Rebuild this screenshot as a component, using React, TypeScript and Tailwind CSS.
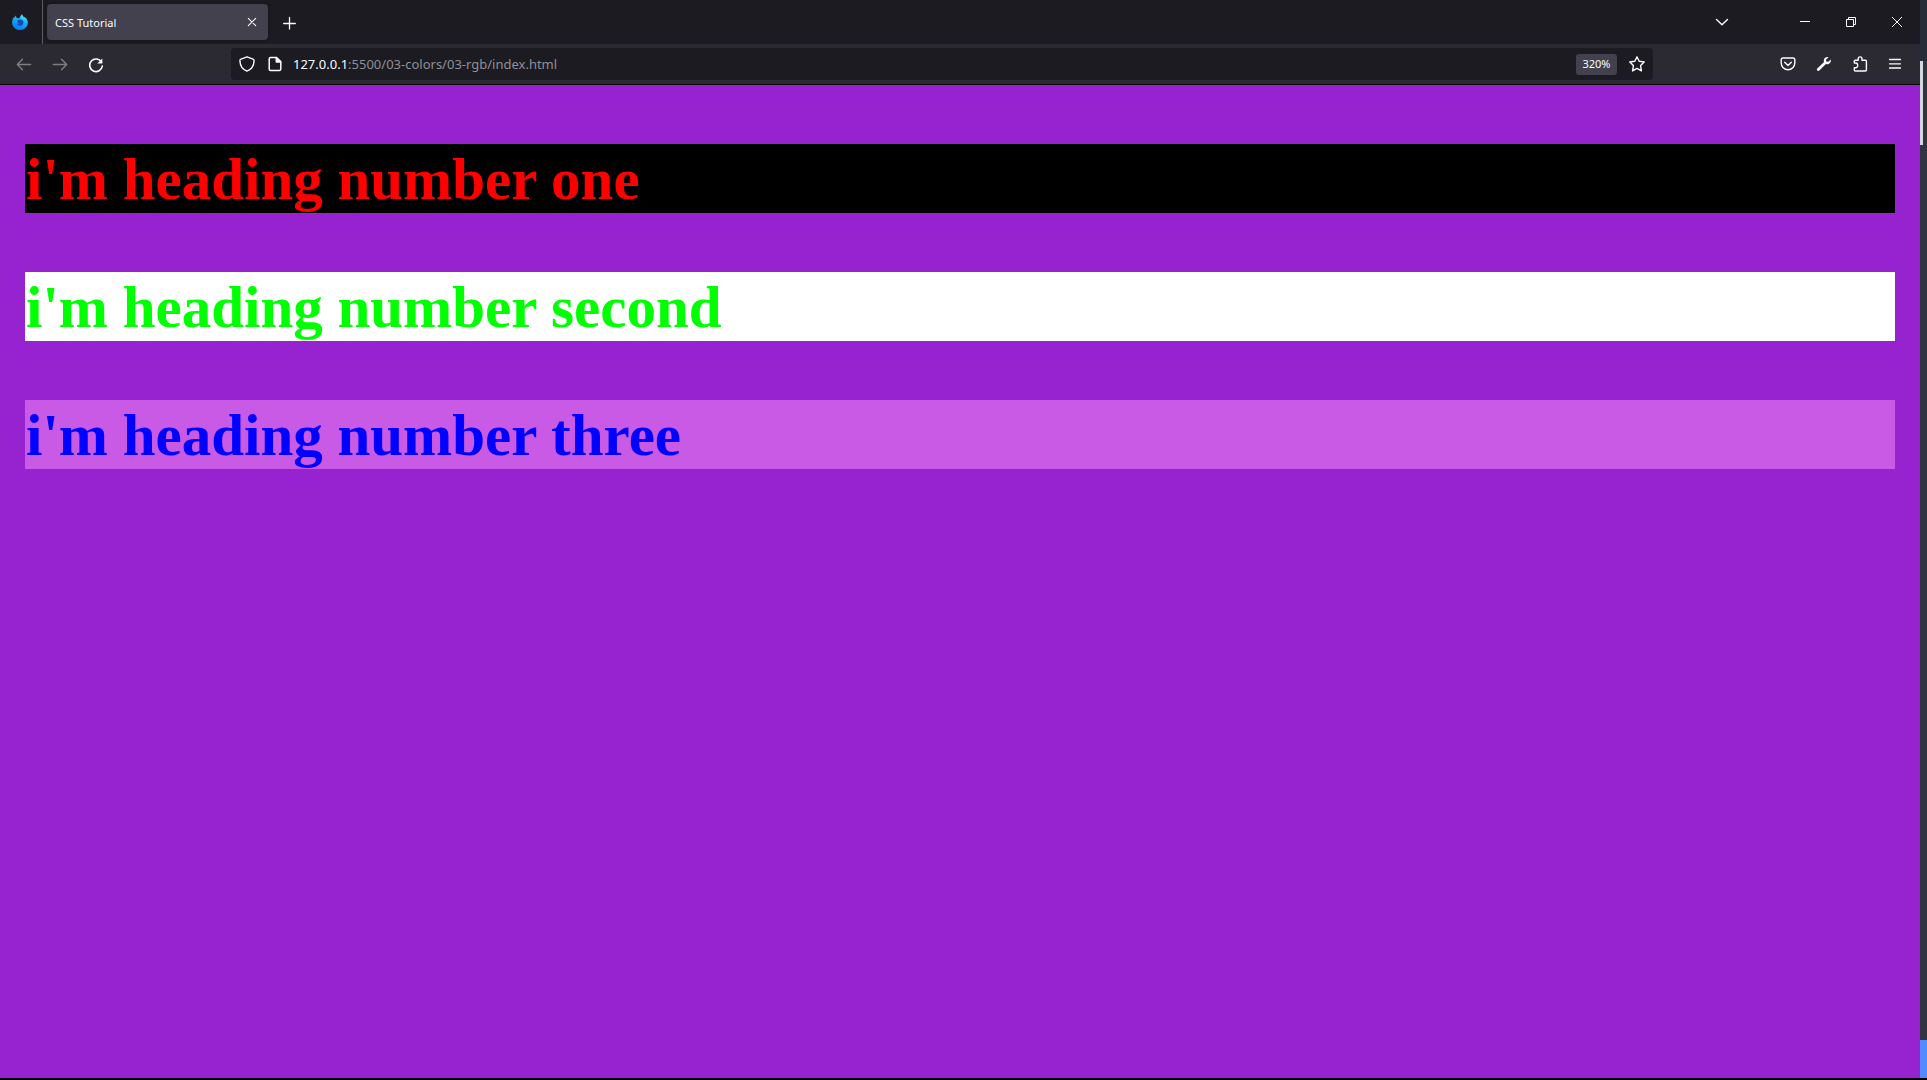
import type { ReactNode } from "react";

function IconButton({ label, className = "", children }: { label: string; className?: string; children: ReactNode }) {
  return (
    <button type="button" aria-label={label} className={"flex h-8 shrink-0 items-center justify-center text-[#fbfbfe] " + className}>
      {children}
    </button>
  );
}

function Icon({ children, stroke = 1.3 }: { children: ReactNode; stroke?: number }) {
  return (
    <svg viewBox="0 0 16 16" className="size-4" fill="none" stroke="currentColor" strokeWidth={stroke} strokeLinecap="round" strokeLinejoin="round" aria-hidden="true">
      {children}
    </svg>
  );
}

function BrowserLogo() {
  return (
    <svg viewBox="0 0 16 16" className="size-4" aria-hidden="true">
      <defs>
        <linearGradient id="flame" x1="0.75" y1="0" x2="0.3" y2="1">
          <stop offset="0" stopColor="#5df3f5" />
          <stop offset="0.4" stopColor="#12b4f8" />
          <stop offset="1" stopColor="#0873f4" />
        </linearGradient>
      </defs>
      <path d="M10.2.2c.2 1.500 1 2.200 2.200 3.200V2.800C15 4.600 16 7 15.800 9.200 15.500 13 12 16 8 16 3.800 16 .3 12.900.1 8.900 0 6.600.8 4.500 2.200 2.800L2.500 4.100 3.500 1.600 4.800 4C5.800 3.900 6.600 4.100 7.300 4.500 8 2.900 8.700 1.200 10.200.2Z" fill="url(#flame)" />
      <path d="M5 6.200 7.200 5.900C8.500 4.900 10.600 5.600 11.300 7.500 12 9.900 10.300 11.800 8.200 11.800 6.500 11.800 5 10.700 4.700 9.200 5.600 9.900 6.700 9.700 7.600 8.900 6.500 8.900 5.700 8.500 5.700 7.700Z" fill="#1b48b8" />
      <path d="M5.700 7.700C6.500 7 7.500 7.200 8.100 7.700L7.600 8.900C6.500 8.900 5.700 8.500 5.700 7.700Z" fill="#39378f" />
    </svg>
  );
}

function TabBar() {
  return (
    <div className="flex h-11 items-center bg-[#1c1b22]">
      <div className="flex h-full w-[43px] items-center justify-end border-r border-[#5b5b61] pr-[14px]">
        <BrowserLogo />
      </div>
      <div className="ml-1 flex h-9 w-[221px] items-center rounded-[4px] bg-[#42414d] pl-2 text-[11px] text-[#fbfbfe] shadow-[0_0_3px_rgba(0,0,0,0.5)]">
        <span className="flex-1 pt-[2px]">CSS Tutorial</span>
        <IconButton label="Close tab" className="w-8">
          <Icon stroke={1.1}><path d="M4.300 4.300l7.400 7.400M11.700 4.300l-7.400 7.400" /></Icon>
        </IconButton>
      </div>
      <IconButton label="New tab" className="ml-[5px] w-8 pt-px">
        <Icon stroke={1.3}><path d="M8.500 2.500v11.500M2.700 8.500h11.600" /></Icon>
      </IconButton>
      <div className="flex-1" />
      <IconButton label="List all tabs" className="mr-[37px] w-[46px]">
        <Icon stroke={1.4}><path d="M2.500 5.500 8 10.800l5.500-5.300" /></Icon>
      </IconButton>
      <IconButton label="Minimize" className="w-[46px]">
        <svg viewBox="0 0 10 10" className="size-[10px]" stroke="currentColor" aria-hidden="true"><path d="M0 4.500h10" /></svg>
      </IconButton>
      <IconButton label="Restore" className="w-[46px]">
        <svg viewBox="0 0 10 10" className="size-[10px]" fill="none" stroke="currentColor" aria-hidden="true"><path d="M.5 2.500h7v7h-7zM2.500 2.500v-2h7v7h-2" /></svg>
      </IconButton>
      <IconButton label="Close window" className="w-[46px]">
        <svg viewBox="0 0 10 10" className="size-[10px]" stroke="currentColor" aria-hidden="true"><path d="M0 0l10 10M10 0L0 10" /></svg>
      </IconButton>
    </div>
  );
}

function AddressBar() {
  return (
    <div className="ml-[117px] flex h-8 flex-1 items-center rounded-[4px] bg-[#1c1b22]">
      <IconButton label="Tracking protection" className="ml-[2px] w-7">
        <Icon stroke={1.4}><path d="M8 .8 14 3.200c.8.3 1.100.9 1.100 1.600C14.900 9.600 12.800 13.400 8 15.200 3.200 13.400 1.100 9.600.9 4.800c0-.7.3-1.300 1.100-1.600Z" /></Icon>
      </IconButton>
      <IconButton label="Site information" className="w-7">
        <Icon stroke={1.5}>
          <path d="M9.500 1.500H3.700c-.9 0-1.500.6-1.500 1.500v10c0 .9.600 1.500 1.500 1.500h8.600c.9 0 1.500-.6 1.500-1.500V5.800Z" />
          <path d="M9.300 1.700v4.200h4.300Z" fill="currentColor" />
        </Icon>
      </IconButton>
      <label htmlFor="address" className="ml-1 pt-[2px] text-[13px] text-[#fbfbfe]">127.0.0.1</label>
      <input id="address" type="text" defaultValue=":5500/03-colors/03-rgb/index.html" className="min-w-0 flex-1 bg-transparent pt-[2px] text-[13px] text-[#8f8f95] outline-none" />
      <button type="button" className="h-[21px] w-[41px] rounded-[3px] bg-[#42414d] pt-px text-[11px] text-[#fbfbfe]">320%</button>
      <IconButton label="Bookmark this page" className="ml-1 w-8">
        <Icon stroke={1.400}><path d="M8 .8 10.200 5.300 15.200 6 11.600 9.600 12.400 14.900 8 12.400 3.600 14.900 4.400 9.600.8 6l5-.7Z" /></Icon>
      </IconButton>
    </div>
  );
}

function Toolbar() {
  return (
    <div className="flex h-[41px] items-center border-b border-[#0c0c0d] bg-[#2b2a33] pl-[6px]">
      <IconButton label="Back" className="w-9 opacity-40">
        <Icon stroke={1.4}><path d="M14.700 8.500H1.300M6.500 3.300 1.300 8.500l5.200 5.200" /></Icon>
      </IconButton>
      <IconButton label="Forward" className="w-9 opacity-40">
        <Icon stroke={1.4}><path d="M1.300 8.500h13.400M9.500 3.300l5.200 5.200-5.200 5.200" /></Icon>
      </IconButton>
      <IconButton label="Reload" className="w-9 pt-px">
        <Icon stroke={1.6}>
          <path d="M13.500 5.100A6.300 6.300 0 1 0 14.300 9" />
          <path d="M14.300 1.500v5H9.300Z" fill="currentColor" stroke="none" />
        </Icon>
      </IconButton>
      <AddressBar />
      <div className="ml-[117px] flex pr-2">
        <IconButton label="Save to Pocket" className="w-9">
          <Icon stroke={1.4}><path d="M3 2h10c1.200 0 1.800.7 1.800 1.800V7a6.800 6.800 0 0 1-13.600 0V3.800C1.200 2.700 1.800 2 3 2ZM4.700 6.300 8 9.400l3.300-3.100" /></Icon>
        </IconButton>
        <IconButton label="Developer tools" className="w-9">
          <Icon>
            <path d="M14.800 3.400 12.300 5.700 10.200 5.500 10 3.800 12.500 1.200C10.500.6 8.200 2 7.800 4c-.1.700 0 1.300.2 1.900L1.300 12.400c-.6.600-.6 1.500-.1 2.100.6.600 1.500.6 2.100 0L9.900 7.900c2.500 1 5.500-1.200 4.900-4.500Z" fill="currentColor" stroke="none" />
          </Icon>
        </IconButton>
        <IconButton label="Extensions" className="w-9">
          <Icon stroke={1.4}><path d="M2.300 7V5.200c0-.5.400-.9.900-.9h3V2.800a1.900 1.900 0 0 1 3.800 0v1.500h3.500c.5 0 .9.400.9.900v8.900c0 .5-.4.900-.9.900H3.200c-.5 0-.9-.4-.9-.9v-2.400h1.600a1.900 1.900 0 0 0 1.700-2.400A1.900 1.900 0 0 0 3.900 7Z" /></Icon>
        </IconButton>
        <IconButton label="Application menu" className="w-[34px]">
          <Icon stroke={1.3}><path d="M2.500 3.500h11M2.500 7.800h11M2.500 12h11" /></Icon>
        </IconButton>
      </div>
    </div>
  );
}

const headings = [
  { text: "i'm heading number one", style: "bg-black text-[#ff0000]" },
  { text: "i'm heading number second", style: "bg-white text-[#00ff00]" },
  { text: "i'm heading number three", style: "bg-[#c95ae6] text-[#0000ff]" },
];

export default function App() {
  return (
    <div className="flex h-screen flex-col bg-black font-['Noto_Sans','Open_Sans',sans-serif]">
      <div className="flex min-h-0 flex-1">
        <div className="flex min-w-0 flex-1 flex-col">
          <header>
            <TabBar />
            <Toolbar />
          </header>
          <main className="flex flex-1 flex-col gap-[59px] bg-[#9622d0] px-[25px] pt-[59px] font-['Liberation_Serif',serif]">
            {headings.map((h) => (
              <h3 key={h.text} className={"pt-[2px] pl-px text-[59px] leading-[67px] font-bold " + h.style}>{h.text}</h3>
            ))}
          </main>
        </div>
        <aside className="flex w-[7px] shrink-0 flex-col bg-[#2f343f]">
          <div className="h-[61px] bg-[#282c38]" />
          <div className="h-[84px] w-[3px] bg-[#d5d7de]" />
          <div className="flex-1" />
          <div className="h-[38px] bg-[#528bff]" />
        </aside>
      </div>
      <div className="h-[2px] shrink-0 bg-black" />
    </div>
  );
}
